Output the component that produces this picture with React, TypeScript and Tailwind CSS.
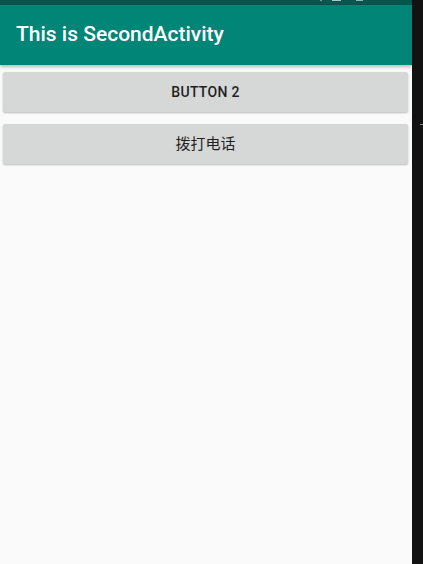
export default function App() {
  return (
    <div className="flex h-[564px] w-[423px] bg-[#121212] font-['Roboto','Noto_Sans_CJK_SC',sans-serif]">
      <div className="flex w-[412px] flex-col bg-[#fafafa]">
        <div className="relative h-[5px] bg-[#00574b]">
          <div className="absolute left-[320px] top-0 h-[1px] w-[2px] bg-[#6f9f98]" />
          <div className="absolute left-[332px] top-0 h-[1px] w-[9px] bg-[#a9c6c2]" />
          <div className="absolute left-[356px] top-0 h-[1px] w-[7px] bg-[#8fb5b0]" />
        </div>
        <div className="relative z-10 flex h-[60px] items-center bg-[#008577] px-4 shadow-[0_2px_3px_rgba(0,0,0,0.25)]">
          <span className="text-[21px] font-medium text-white">This is SecondActivity</span>
        </div>
        <div className="flex flex-col gap-3 pl-[3px] pr-[4px] pt-[7px]">
          <button className="h-10 rounded-[2px] bg-[#d6d7d7] text-[14px] font-medium tracking-[0.3px] text-[#1f1f1f] shadow-[0_1px_2px_rgba(0,0,0,0.25)]">
            BUTTON 2
          </button>
          <button className="h-10 rounded-[2px] bg-[#d6d7d7] text-[15px] text-[#1f1f1f] shadow-[0_1px_2px_rgba(0,0,0,0.25)]">
            拨打电话
          </button>
        </div>
      </div>
      <div className="relative flex-1">
        <div className="absolute left-[8px] top-[124px] h-[1px] w-[3px] bg-[#888]" />
      </div>
    </div>
  );
}
